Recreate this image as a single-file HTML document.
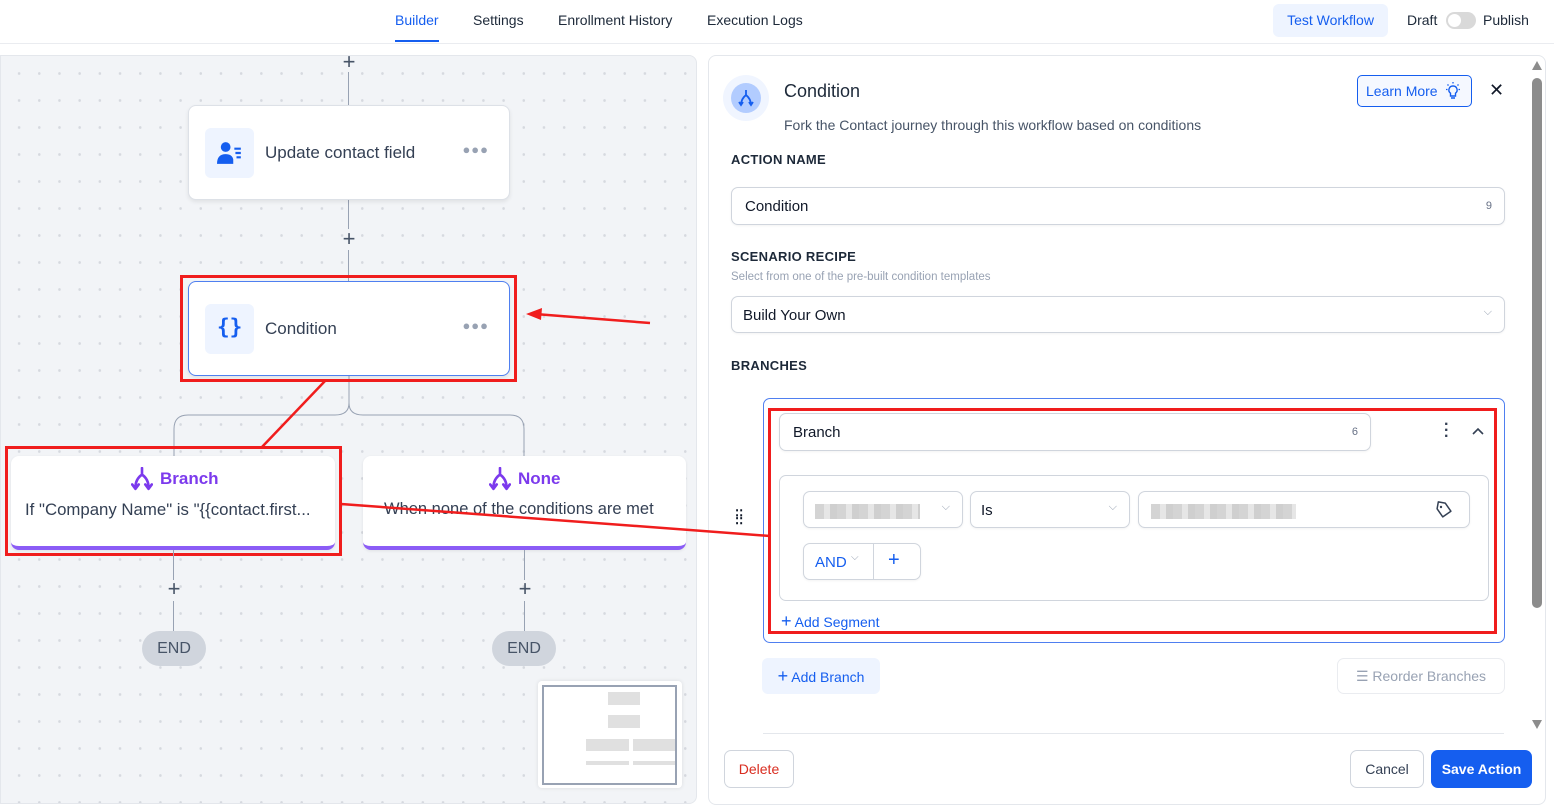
<!DOCTYPE html>
<html><head><meta charset="utf-8"><style>
*{box-sizing:border-box;margin:0;padding:0}
body{width:1554px;height:811px;position:relative;background:#fff;font-family:"Liberation Sans",sans-serif;color:#101828;overflow:hidden}
.a{position:absolute}
.nav{font-size:14px;top:12px;color:#1d2939}
.canvas{left:0;top:55px;width:697px;height:749px;background-color:#f2f4f7;background-image:radial-gradient(circle,#d6d9df 1.2px,transparent 1.5px);background-size:20.2px 27px;background-position:8px 4px;border:1px solid #e4e7ec;border-radius:0 8px 8px 0}
.vl{width:1px;background:#98a2b3}
.plus{font-size:22px;color:#475467;line-height:20px;width:20px;text-align:center;font-weight:300}
.card{background:#fff;border:1px solid #dde1e7;border-radius:8px;box-shadow:0 2px 4px rgba(0,0,0,.08)}
.ic{left:16px;top:22px;width:49px;height:50px;background:#eef4ff;border-radius:6px}
.ctext{font-size:17px;color:#344054;left:76px;top:37px}
.dots{right:20px;top:36px;font-size:13px;color:#98a2b3;letter-spacing:1px}
.bc{background:#fff;border-radius:8px;border-bottom:4px solid #8b5cf6;box-shadow:0 1px 3px rgba(0,0,0,.08)}
.end{width:64px;height:35px;border-radius:18px;background:#d0d5dd;color:#475467;font-size:16px;text-align:center;line-height:35px}
.red{border:3px solid #f01d1d}
.panel{left:708px;top:55px;width:838px;height:750px;border:1px solid #e4e7ec;border-radius:8px;background:#fff}
.lbl{font-size:13px;font-weight:bold;color:#1d2939;letter-spacing:.3px}
.inp{border:1px solid #d0d5dd;border-radius:7px;background:#fff;font-size:14px;color:#101828;box-shadow:0 1px 2px rgba(0,0,0,.05)}
.blur{background:repeating-linear-gradient(90deg,#d4d4d4 0 9px,#e6e6e6 9px 15px,#cfcfcf 15px 22px);height:15px}
.btn{border:1px solid #d0d5dd;border-radius:7px;font-size:14px;text-align:center}
</style></head><body>
<!-- header -->
<div class="a nav" style="left:395px;color:#155eef">Builder</div>
<div class="a" style="left:395px;top:40px;width:44px;height:2px;background:#155eef"></div>
<div class="a nav" style="left:473px">Settings</div>
<div class="a nav" style="left:558px">Enrollment History</div>
<div class="a nav" style="left:707px">Execution Logs</div>
<div class="a" style="left:1273px;top:4px;width:115px;height:33px;background:#eef4ff;border-radius:6px;color:#155eef;font-size:14px;text-align:center;line-height:33px">Test Workflow</div>
<div class="a nav" style="left:1407px">Draft</div>
<div class="a" style="left:1446px;top:12px;width:30px;height:17px;border-radius:9px;background:#d9d9d9"><div class="a" style="left:2px;top:2px;width:13px;height:13px;border-radius:50%;background:#fff"></div></div>
<div class="a nav" style="left:1483px">Publish</div>
<div class="a" style="left:0;top:43px;width:1554px;height:1px;background:#eaecf0"></div>

<!-- canvas -->
<div class="a canvas"></div>
<div class="a vl" style="left:348px;top:72px;height:33px"></div>
<div class="a plus" style="left:339px;top:52px">+</div>
<div class="a vl" style="left:348px;top:199px;height:30px"></div>
<div class="a plus" style="left:339px;top:229px">+</div>
<div class="a vl" style="left:348px;top:250px;height:31px"></div>
<svg class="a" style="left:170px;top:375px" width="360" height="82"><path d="M179 0 V28 Q179 40 165 40 H18 Q4 40 4 54 V82 M179 28 Q179 40 193 40 H340 Q354 40 354 54 V82" fill="none" stroke="#98a2b3" stroke-width="1"/></svg>

<div class="a card" style="left:188px;top:105px;width:322px;height:95px">
 <div class="a ic"><svg class="a" style="left:12px;top:12px" width="26" height="26" viewBox="0 0 24 24"><circle cx="8" cy="6.5" r="4.5" fill="#155eef"/><path d="M0 22 Q0 13 8 13 Q14 13 15 18 V22Z" fill="#155eef"/><path d="M16 8h6M17 12h5M18 16h4" stroke="#155eef" stroke-width="2"/></svg></div>
 <div class="a ctext">Update contact field</div><div class="a dots">●●●</div>
</div>
<div class="a card" style="left:188px;top:281px;width:322px;height:95px;border:1.5px solid #4f7ff0">
 <div class="a ic"><div class="a" style="left:12px;top:11px;font-size:21px;font-weight:bold;color:#155eef;font-family:'DejaVu Sans Mono',monospace">{}</div></div>
 <div class="a ctext">Condition</div><div class="a dots">●●●</div>
</div>
<div class="a red" style="left:180px;top:275px;width:337px;height:107px"></div>

<svg width="0" height="0" style="position:absolute"><defs><symbol id="fork" viewBox="0 0 20 22"><path d="M10 1 V7 M10 7 Q4 11 4 19 M10 7 Q16 11 16 19 M1 16 L4 20 L7 16 M13 16 L16 20 L19 16" fill="none" stroke="#7c3aed" stroke-width="2.4" stroke-linecap="round" stroke-linejoin="round"/></symbol></defs></svg>
<div class="a bc" style="left:11px;top:456px;width:324px;height:94px">
 <svg class="a" style="left:120px;top:11px" width="22" height="24"><use href="#fork"/></svg>
 <div class="a" style="left:149px;top:13px;font-size:17px;font-weight:bold;color:#7c3aed">Branch</div>
 <div class="a" style="left:14px;top:44px;font-size:16.8px;color:#344054;white-space:nowrap">If "Company Name" is "{{contact.first...</div>
</div>
<div class="a bc" style="left:363px;top:456px;width:323px;height:94px">
 <svg class="a" style="left:126px;top:11px" width="22" height="24"><use href="#fork"/></svg>
 <div class="a" style="left:155px;top:13px;font-size:17px;font-weight:bold;color:#7c3aed">None</div>
 <div class="a" style="left:21px;top:44px;font-size:16.5px;color:#344054;white-space:nowrap">When none of the conditions are met</div>
</div>
<div class="a red" style="left:5px;top:446px;width:337px;height:110px"></div>

<div class="a vl" style="left:173px;top:550px;height:30px"></div><div class="a plus" style="left:164px;top:579px">+</div><div class="a vl" style="left:173px;top:601px;height:30px"></div>
<div class="a vl" style="left:524px;top:550px;height:30px"></div><div class="a plus" style="left:515px;top:579px">+</div><div class="a vl" style="left:524px;top:601px;height:30px"></div>
<div class="a end" style="left:142px;top:631px">END</div>
<div class="a end" style="left:492px;top:631px">END</div>

<div class="a" style="left:538px;top:681px;width:144px;height:107px;background:#fff;border-radius:4px;box-shadow:0 0 4px rgba(0,0,0,.1)">
 <div class="a" style="left:4px;top:4px;width:135px;height:100px;border:2px solid #98a2b3"></div>
 <div class="a" style="left:70px;top:11px;width:32px;height:13px;background:#e0e0e0"></div>
 <div class="a" style="left:70px;top:34px;width:32px;height:13px;background:#e0e0e0"></div>
 <div class="a" style="left:48px;top:58px;width:43px;height:12px;background:#e0e0e0"></div>
 <div class="a" style="left:95px;top:58px;width:42px;height:12px;background:#e0e0e0"></div>
 <div class="a" style="left:48px;top:80px;width:43px;height:4px;background:#e0e0e0"></div>
 <div class="a" style="left:95px;top:80px;width:42px;height:4px;background:#e0e0e0"></div>
</div>

<!-- panel -->
<div class="a panel"></div>
<div class="a" style="left:723px;top:75px;width:46px;height:46px;border-radius:50%;background:#f0f5ff"></div>
<div class="a" style="left:731px;top:83px;width:30px;height:30px;border-radius:50%;background:#b2ccff"><svg class="a" style="left:7px;top:6px" width="16" height="18" viewBox="0 0 16 18"><path d="M8 1 V6 M8 6 Q3 10 3 16 M8 6 Q13 10 13 16 M1 13 L3 16 L5 13 M11 13 L13 16 L15 13" fill="none" stroke="#155eef" stroke-width="1.8"/></svg></div>
<div class="a" style="left:784px;top:81px;font-size:18px;color:#1d2939">Condition</div>
<div class="a" style="left:784px;top:117px;font-size:14px;color:#475467">Fork the Contact journey through this workflow based on conditions</div>
<div class="a" style="left:1357px;top:75px;width:115px;height:32px;border:1px solid #155eef;border-radius:5px;background:#f5f8ff;color:#155eef;font-size:14px;line-height:30px;padding-left:8px">Learn More</div>
<svg class="a" style="left:1443px;top:81px" width="20" height="20" viewBox="0 0 20 20"><path d="M10 5 a4 4 0 0 1 2.5 7.2 V15 h-5 V12.2 A4 4 0 0 1 10 5Z M8 17 h4" fill="none" stroke="#155eef" stroke-width="1.4"/><path d="M10 1 v1.5 M3 8.5 h1.5 M15.5 8.5 H17 M4.5 3.5 l1 1 M15.5 3.5 l-1 1" stroke="#155eef" stroke-width="1.3"/></svg>
<div class="a" style="left:1489px;top:80px;font-size:18px;color:#101828">✕</div>

<div class="a lbl" style="left:731px;top:152px">ACTION NAME</div>
<div class="a inp" style="left:731px;top:187px;width:774px;height:38px"><span class="a" style="left:13px;top:10px;font-size:15px">Condition</span><span class="a" style="right:12px;top:12px;font-size:11px;color:#667085">9</span></div>
<div class="a lbl" style="left:731px;top:249px">SCENARIO RECIPE</div>
<div class="a" style="left:731px;top:271px;font-size:11.5px;color:#98a2b3">Select from one of the pre-built condition templates</div>
<div class="a inp" style="left:731px;top:296px;width:774px;height:37px"><span class="a" style="left:11px;top:10px;font-size:15px">Build Your Own</span><span class="a" style="right:12px;top:9px;font-size:11px;color:#98a2b3">⌵</span></div>
<div class="a lbl" style="left:731px;top:358px">BRANCHES</div>

<div class="a" style="left:735px;top:512px;font-size:13px;font-weight:bold;line-height:5px;color:#101828">⁚⁚<br>⁚⁚</div>
<div class="a" style="left:763px;top:398px;width:742px;height:245px;border:1px solid #4f7ff0;border-radius:7px"></div>
<div class="a inp" style="left:779px;top:413px;width:592px;height:38px"><span class="a" style="left:13px;top:10px;font-size:15px">Branch</span><span class="a" style="right:12px;top:12px;font-size:11px;color:#667085">6</span></div>
<div class="a" style="left:1444px;top:422px;font-size:16px;font-weight:bold;line-height:6px;color:#344054">·<br>·<br>·</div>
<svg class="a" style="left:1471px;top:426px" width="14" height="10"><path d="M2 8 L7 3 L12 8" fill="none" stroke="#344054" stroke-width="1.6"/></svg>
<div class="a" style="left:779px;top:475px;width:710px;height:126px;border:1px solid #d0d5dd;border-radius:7px"></div>
<div class="a inp" style="left:803px;top:491px;width:160px;height:37px"><div class="a blur" style="left:11px;top:12px;width:105px"></div><span class="a" style="right:12px;top:9px;font-size:11px;color:#98a2b3">⌵</span></div>
<div class="a inp" style="left:970px;top:491px;width:160px;height:37px"><span class="a" style="left:10px;top:10px;font-size:15px">Is</span><span class="a" style="right:12px;top:9px;font-size:11px;color:#98a2b3">⌵</span></div>
<div class="a inp" style="left:1138px;top:491px;width:332px;height:37px"><div class="a blur" style="left:12px;top:12px;width:145px"></div><svg class="a" style="left:295px;top:8px" width="20" height="20" viewBox="0 0 20 20"><path d="M3 3 H10 L17 10 L10 17 L3 10Z" fill="none" stroke="#344054" stroke-width="1.5" stroke-linejoin="round" transform="rotate(10 10 10)"/><circle cx="7" cy="7" r="1.2" fill="#344054"/></svg></div>
<div class="a inp" style="left:803px;top:543px;width:118px;height:37px"><span class="a" style="left:11px;top:10px;color:#155eef;font-size:15px">AND</span><span class="a" style="left:47px;top:8px;font-size:10px;color:#98a2b3">⌵</span><div class="a" style="left:69px;top:0;width:1px;height:35px;background:#d0d5dd"></div><span class="a" style="left:84px;top:5px;font-size:20px;color:#155eef">+</span></div>
<div class="a" style="left:781px;top:611px;font-size:14px;color:#155eef"><span style="font-size:18px">+</span> Add Segment</div>
<div class="a red" style="left:768px;top:408px;width:729px;height:226px"></div>

<div class="a" style="left:762px;top:658px;width:118px;height:36px;background:#eef4ff;border-radius:6px;color:#155eef;font-size:14px;line-height:36px;text-align:center"><span style="font-size:18px">+</span> Add Branch</div>
<div class="a btn" style="left:1337px;top:658px;width:168px;height:36px;line-height:34px;color:#98a2b3;border-color:#eaecf0">☰ Reorder Branches</div>
<div class="a" style="left:763px;top:733px;width:741px;height:1px;background:#e4e7ec"></div>
<div class="a btn" style="left:724px;top:750px;width:70px;height:38px;line-height:36px;color:#d92d20">Delete</div>
<div class="a btn" style="left:1350px;top:750px;width:74px;height:38px;line-height:36px;color:#344054">Cancel</div>
<div class="a btn" style="left:1431px;top:750px;width:101px;height:38px;line-height:38px;background:#155eef;border:none;color:#fff;font-weight:bold">Save Action</div>
<div class="a" style="left:1532px;top:78px;width:10px;height:530px;background:#8c8c8c;border-radius:5px"></div>
<div class="a" style="left:1532px;top:61px;width:0;height:0;border-left:5px solid transparent;border-right:5px solid transparent;border-bottom:9px solid #8c8c8c"></div>
<div class="a" style="left:1532px;top:720px;width:0;height:0;border-left:5px solid transparent;border-right:5px solid transparent;border-top:9px solid #8c8c8c"></div>

<!-- red annotations -->
<svg class="a" style="left:0;top:0" width="1554" height="811"><g stroke="#f01d1d" stroke-width="2.5" fill="none"><path d="M650 323 L535 314"/><path d="M325 381 L262 447"/><path d="M341 504 L770 536"/></g><path d="M526 314 L542 308 L541 320Z" fill="#f01d1d"/></svg>
</body></html>
